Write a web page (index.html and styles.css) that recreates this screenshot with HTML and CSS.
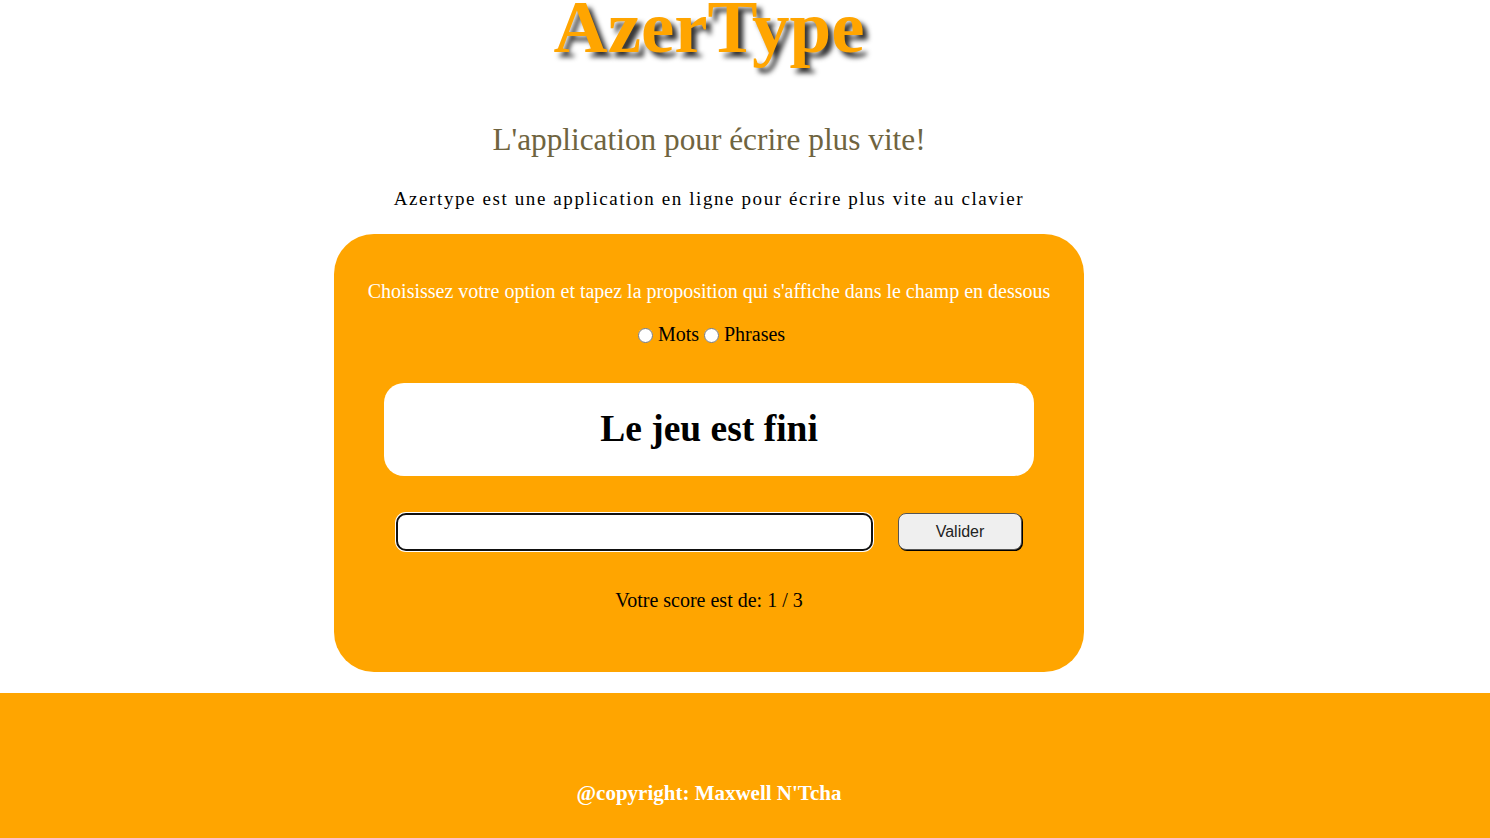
FILE: index.html
```html
<!DOCTYPE html>
<html lang="fr">
<head>
<meta charset="utf-8">
<title>AzerType</title>
<link rel="stylesheet" href="styles.css">
</head>
<body>
<div class="page">
  <header class="header">
    <h1 class="logo">AzerType</h1>
    <h2 class="tagline">L'application pour écrire plus vite!</h2>
    <p class="intro">Azertype est une application en ligne pour écrire plus vite au clavier</p>
  </header>
  <main class="game">
    <p class="instructions">Choisissez votre option et tapez la proposition qui s'affiche dans le champ en dessous</p>
    <div class="options">
      <label class="option"><input type="radio" name="mode" class="radio">Mots</label>
      <label class="option"><input type="radio" name="mode" class="radio">Phrases</label>
    </div>
    <div class="proposal">Le jeu est fini</div>
    <div class="answer">
      <input type="text" class="answer-input">
      <button class="answer-btn">Valider</button>
    </div>
    <p class="score">Votre score est de: <span>1 / 3</span></p>
  </main>
</div>
<footer class="footer">
  <div class="footer-inner">@copyright: Maxwell N'Tcha</div>
</footer>
</body>
</html>
```

FILE: styles.css
```css
html, body {
  margin: 0;
  padding: 0;
  background: #fff;
}
body {
  font-family: "Liberation Serif", "Times New Roman", serif;
  color: #000;
  overflow: hidden;
}
.page {
  width: 1418px;
  display: flex;
  flex-direction: column;
  align-items: center;
}
.header {
  display: flex;
  flex-direction: column;
  align-items: center;
}
.logo {
  margin: -14px 0 0;
  font-size: 75px;
  line-height: 82px;
  font-weight: bold;
  color: #ffa500;
  text-shadow: 5px 5px 5px #333;
}
.tagline {
  margin: 54px 0 0;
  font-size: 31.3px;
  line-height: 36px;
  font-weight: normal;
  color: #6f6440;
}
.intro {
  margin: 30px 0 0;
  font-size: 19px;
  line-height: 22px;
  letter-spacing: 1.6px;
}
.game {
  box-sizing: border-box;
  width: 750px;
  margin-top: 24px;
  padding: 46px 0 61px;
  background: #ffa500;
  border-radius: 40px;
  display: flex;
  flex-direction: column;
  align-items: center;
}
.instructions {
  margin: 0;
  font-size: 20px;
  line-height: 22px;
  color: #fff;
}
.options {
  margin-top: 21px;
  font-size: 20px;
  line-height: 22px;
  display: flex;
  align-items: center;
}
.option {
  display: flex;
  align-items: center;
}
.radio {
  width: 15px;
  height: 15px;
  margin: 2px 5px 0 5px;
}
.proposal {
  box-sizing: border-box;
  width: 650px;
  height: 93px;
  margin-top: 38px;
  background: #fff;
  border-radius: 20px;
  display: flex;
  align-items: center;
  justify-content: center;
  font-size: 37.5px;
  font-weight: bold;
  padding-bottom: 2px;
}
.answer {
  margin-top: 37px;
  display: flex;
  gap: 25px;
}
.answer-input {
  box-sizing: border-box;
  width: 477px;
  height: 38px;
  margin: 0;
  border: 2px solid #111;
  border-radius: 10px;
  background: #fff;
  box-shadow: 0 0 0 1px #fff;
  outline: none;
}
.answer-btn {
  box-sizing: border-box;
  width: 124px;
  height: 37px;
  margin: 0;
  border: 1.5px solid #555;
  border-radius: 8px;
  box-shadow: 1px 1px 0 #000;
  background: #efefef;
  font-family: "Liberation Sans", Arial, sans-serif;
  font-size: 16px;
  color: #222;
}
.score {
  margin: 38px 0 0;
  font-size: 20px;
  line-height: 22px;
}
.footer {
  margin-top: 21px;
  background: #ffa500;
  padding: 88px 0 40px;
}
.footer-inner {
  width: 1418px;
  text-align: center;
  color: #fff;
  font-weight: bold;
  font-size: 21px;
  line-height: 24px;
}
```
